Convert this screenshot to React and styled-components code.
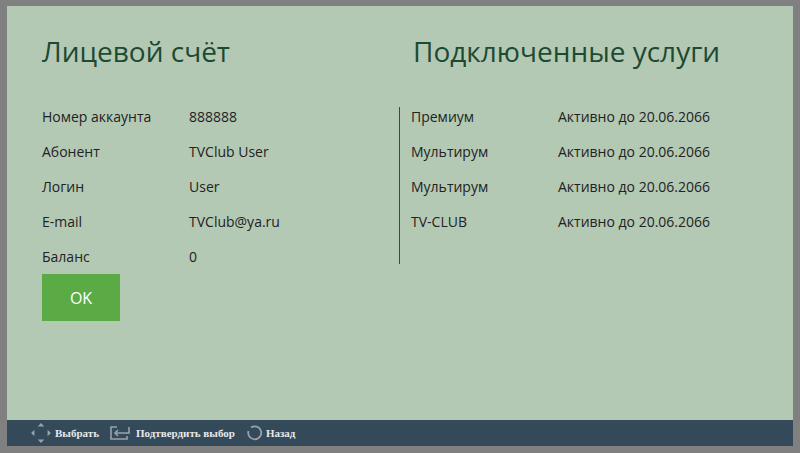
import React from "react";
import styled, { createGlobalStyle } from "styled-components";

const Global = createGlobalStyle`
  html, body { margin: 0; padding: 0; background: #808080; }
  body { font-family: "Open Sans", "Noto Sans", sans-serif; }
`;

const Frame = styled.div`
  width: 786px;
  height: 440px;
  margin: 6px 7px 7px 7px;
  background: #b4c9b4;
  display: flex;
  flex-direction: column;
`;

const Main = styled.div`
  flex: 1;
  display: flex;
  padding: 25px 0 0 35px;
`;

const Column = styled.div`
  width: ${(p) => p.$w}px;
  display: flex;
  flex-direction: column;
`;

const Title = styled.h1`
  margin: 0 0 28px ${(p) => p.$indent || 0}px;
  font-weight: 400;
  font-size: 28px;
  line-height: 40px;
  color: #1d4a33;
`;

const Rows = styled.div`
  display: flex;
  flex-direction: column;
  padding-left: ${(p) => p.$pad || 0}px;
  padding-bottom: ${(p) => p.$pb || 0}px;
  background: ${(p) =>
    p.$line
      ? "linear-gradient(#3a4a3e, #3a4a3e) no-repeat 0 8px / 1px calc(100% - 8px)"
      : "none"};
`;

const Row = styled.div`
  display: flex;
  height: 35px;
  align-items: center;
  font-size: 14px;
  color: #222;
`;

const Label = styled.span`
  width: ${(p) => p.$w}px;
`;

const Button = styled.button`
  width: 78px;
  height: 47px;
  margin-top: 0;
  border: none;
  background: #5aab45;
  color: #fff;
  font-family: inherit;
  font-size: 16px;
`;

const Footer = styled.div`
  height: 26px;
  background: #34495a;
  display: flex;
  align-items: center;
  padding-left: 23px;
  gap: 10px;
  font-family: "Liberation Serif", serif;
  font-weight: 700;
  font-size: 11px;
  color: #e6e9ec;
`;

const Hint = styled.span`
  display: flex;
  align-items: center;
  gap: 3px;
`;

const account = [
  ["Номер аккаунта", "888888"],
  ["Абонент", "TVClub User"],
  ["Логин", "User"],
  ["E-mail", "TVClub@ya.ru"],
  ["Баланс", "0"],
];

const services = [
  ["Премиум", "Активно до 20.06.2066"],
  ["Мультирум", "Активно до 20.06.2066"],
  ["Мультирум", "Активно до 20.06.2066"],
  ["TV-CLUB", "Активно до 20.06.2066"],
];

export default function App() {
  return (
    <>
      <Global />
      <Frame>
        <Main>
          <Column $w={357}>
            <Title>Лицевой счёт</Title>
            <Rows>
              {account.map(([l, v]) => (
                <Row key={l}>
                  <Label $w={147}>{l}</Label>
                  <span>{v}</span>
                </Row>
              ))}
            </Rows>
            <Button>OK</Button>
          </Column>
          <Column $w={380}>
            <Title $indent={14}>Подключенные услуги</Title>
            <Rows $line $pad={12} $pb={25}>
              {services.map(([l, v], i) => (
                <Row key={i}>
                  <Label $w={147}>{l}</Label>
                  <span>{v}</span>
                </Row>
              ))}
            </Rows>
          </Column>
        </Main>
        <Footer>
          <Hint>
            <svg width="22" height="22" viewBox="0 0 20 20" fill="#9aa3ab">
              <path d="M10 1l3 3H7zM10 19l3-3H7zM1 10l3-3v6zM19 10l-3-3v6z" />
            </svg>
            Выбрать
          </Hint>
          <Hint>
            <svg width="24" height="18" viewBox="0 0 24 18" fill="none" stroke="#9aa3ab" strokeWidth="1.6">
              <path d="M8 3H2v12h16v-3" />
              <path d="M6 9h14V3" />
              <path d="M9 6l-3 3 3 3" />
            </svg>
            Подтвердить выбор
          </Hint>
          <Hint>
            <svg width="18" height="18" viewBox="0 0 18 18" fill="none" stroke="#9aa3ab" strokeWidth="1.8">
              <path d="M6 3.5A6.5 6.5 0 1 1 3.5 7" />
            </svg>
            Назад
          </Hint>
        </Footer>
      </Frame>
    </>
  );
}
